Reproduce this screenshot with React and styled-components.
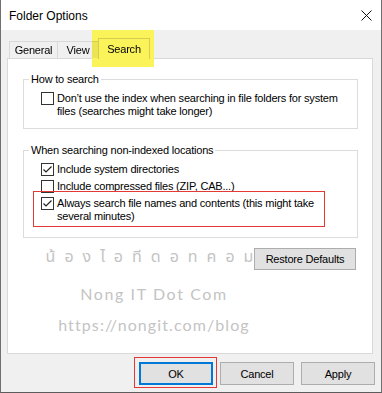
import React from 'react';
import styled, { createGlobalStyle } from 'styled-components';

const Global = createGlobalStyle`
  html, body { margin: 0; padding: 0; background: #f0f0f0; }
  body { font-family: "Liberation Sans", Arial, sans-serif; font-size: 11px; color: #000; }
  * { box-sizing: border-box; }
`;

const Window = styled.div`
  width: 382px;
  height: 393px;
  display: flex;
  flex-direction: column;
  background: #f0f0f0;
  border-left: 1px solid #707070;
  border-right: 1px solid #707070;
  border-bottom: 1px solid #5c5c5c;
  letter-spacing: -0.2px;
  overflow: hidden;
`;

const TitleBar = styled.div`
  height: 30px;
  flex: none;
  background: #fff;
  display: flex;
  align-items: center;
  justify-content: space-between;
  padding: 1px 9px 0 8px;
  font-size: 12px;
  letter-spacing: 0;
`;

const CloseIcon = styled.svg`
  width: 11px;
  height: 11px;
  display: block;
`;

const Body = styled.div`
  flex: 1;
  display: flex;
  flex-direction: column;
  padding: 8px 8px 7px 6px;
`;

const TabStrip = styled.div`
  height: 21px;
  display: flex;
  align-items: flex-end;
  padding-left: 2px;
  margin-bottom: -1px;
  position: relative;
  z-index: 2;
`;

const Tab = styled.div`
  position: relative;
  width: ${p => p.$w}px;
  height: ${p => (p.$active ? 21 : 17)}px;
  margin-left: ${p => (p.$first ? 0 : -1)}px;
  margin-bottom: ${p => (p.$active ? 0 : 1)}px;
  border: 1px solid #d9d9d9;
  border-bottom: none;
  background: ${p => (p.$active ? '#fff' : '#f0f0f0')};
  display: flex;
  align-items: center;
  justify-content: center;
  padding-bottom: ${p => (p.$active ? 1 : 0)}px;
`;

const Highlighter = styled.span`
  position: absolute;
  top: -9px;
  left: -7px;
  right: -5px;
  bottom: -8px;
  background: #fbf35a;
  mix-blend-mode: multiply;
  pointer-events: none;
`;

const Panel = styled.div`
  flex: 1;
  position: relative;
  background: #fff;
  border: 1px solid #d9d9d9;
  padding: 14px 14px 0 15px;
  display: flex;
  flex-direction: column;
`;

const GroupBox = styled.fieldset`
  margin: ${p => p.$mt || 0}px 0 0 0;
  padding: 0;
  min-width: 0;
  border: 1px solid #dcdcdc;
  position: relative;
  z-index: 1;
`;

const Legend = styled.legend`
  margin-left: 5px;
  padding: 0 2px;
  line-height: 13px;
`;

const GroupBody = styled.div`
  display: flex;
  flex-direction: column;
  gap: 4px;
  padding: 6px 8px ${p => p.$pb}px 17px;
`;

const CheckRow = styled.div`
  position: relative;
  display: flex;
  align-items: flex-start;
  gap: 3px;
  line-height: 13px;
  white-space: nowrap;
`;

const Box = styled.span`
  flex: none;
  width: 13px;
  height: 13px;
  border: 1px solid #333;
  background: #fff;
  display: flex;
  align-items: center;
  justify-content: center;
`;

const RedFrame = styled.span`
  position: absolute;
  border: 1px solid #e53935;
  pointer-events: none;
`;

const RowFrame = styled(RedFrame)`
  top: -6px;
  left: -8px;
  width: 292px;
  height: 36px;
`;

const OkFrame = styled(RedFrame)`
  top: -7px;
  left: -7px;
  right: -6px;
  bottom: -5px;
`;

const ButtonRow = styled.div`
  display: flex;
  justify-content: flex-end;
  margin-top: 10px;
  padding-right: 2px;
`;

const Button = styled.button`
  position: relative;
  z-index: 1;
  width: ${p => p.$w}px;
  height: ${p => p.$h}px;
  padding: 0;
  margin: 0;
  background: #e1e1e1;
  border: ${p => (p.$primary ? '2px solid #0078d7' : '1px solid #adadad')};
  font-family: "Liberation Sans", Arial, sans-serif;
  font-size: 11px;
  letter-spacing: -0.2px;
  color: #000;
`;

const Watermark = styled.div`
  position: absolute;
  top: 188px;
  left: 0;
  width: 292px;
  text-align: center;
  color: #c4c4c4;
  pointer-events: none;
  z-index: 0;
`;

const ThaiLine = styled.div`
  font-family: "Noto Sans Thai", "Noto Sans", "DejaVu Sans", sans-serif;
  font-size: 16px;
  line-height: 20px;
  letter-spacing: 9px;
  white-space: nowrap;
`;

const BrandLine = styled.div`
  font-family: Lato, "Open Sans", sans-serif;
  font-size: 16px;
  line-height: 20px;
  letter-spacing: ${p => p.$ls}px;
  margin-top: ${p => p.$mt}px;
  white-space: nowrap;
`;

const Footer = styled.div`
  flex: none;
  height: 23px;
  margin-top: 8px;
  margin-right: -2px;
  display: flex;
  justify-content: flex-end;
  gap: 7px;
`;

const Check = ({ checked }) => (
  <Box>
    {checked && (
      <svg width="11" height="11" viewBox="0 0 11 11">
        <path d="M1.5 5.5 L4 8 L9.5 2.5" fill="none" stroke="#222" strokeWidth="1.2" />
      </svg>
    )}
  </Box>
);

export default function App() {
  return (
    <>
      <Global />
      <Window>
        <TitleBar>
          <span>Folder Options</span>
          <CloseIcon viewBox="0 0 11 11">
            <path d="M0.5 0.5 L10.5 10.5 M10.5 0.5 L0.5 10.5" stroke="#111" strokeWidth="1" />
          </CloseIcon>
        </TitleBar>
        <Body>
          <TabStrip>
            <Tab $w={49} $first>General</Tab>
            <Tab $w={42}>View</Tab>
            <Tab $w={52} $active>
              Search
              <Highlighter />
            </Tab>
          </TabStrip>
          <Panel>
            <Watermark>
              <ThaiLine>น้องไอทีดอทคอม</ThaiLine>
              <BrandLine $mt={17} $ls={1.6}>Nong IT Dot Com</BrandLine>
              <BrandLine $mt={11} $ls={1.1}>https://nongit.com/blog</BrandLine>
            </Watermark>
            <GroupBox>
              <Legend>How to search</Legend>
              <GroupBody $pb={10}>
                <CheckRow>
                  <Check />
                  <span>
                    Don’t use the index when searching in file folders for system
                    <br />
                    files (searches might take longer)
                  </span>
                </CheckRow>
              </GroupBody>
            </GroupBox>
            <GroupBox $mt={15}>
              <Legend>When searching non-indexed locations</Legend>
              <GroupBody $pb={14}>
                <CheckRow>
                  <Check checked />
                  <span>Include system directories</span>
                </CheckRow>
                <CheckRow>
                  <Check />
                  <span>Include compressed files (ZIP, CAB...)</span>
                </CheckRow>
                <CheckRow>
                  <Check checked />
                  <span>
                    Always search file names and contents (this might take
                    <br />
                    several minutes)
                  </span>
                  <RowFrame />
                </CheckRow>
              </GroupBody>
            </GroupBox>
            <ButtonRow>
              <Button $w={102} $h={22}>Restore Defaults</Button>
            </ButtonRow>
          </Panel>
          <Footer>
            <Button $w={74} $h={23} $primary>
              OK
              <OkFrame />
            </Button>
            <Button $w={74} $h={23}>Cancel</Button>
            <Button $w={74} $h={23}>Apply</Button>
          </Footer>
        </Body>
      </Window>
    </>
  );
}
